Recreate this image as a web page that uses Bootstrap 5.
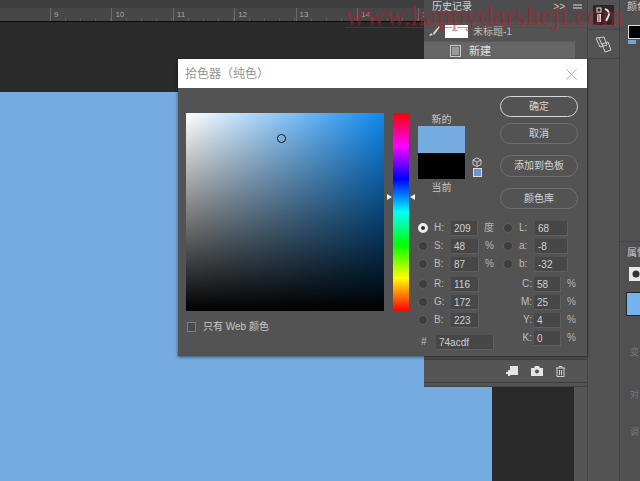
<!DOCTYPE html>
<html lang="zh">
<head>
<meta charset="utf-8">
<title>拾色器</title>
<link rel="stylesheet" href="https://cdn.jsdelivr.net/npm/bootstrap@5.3.0/dist/css/bootstrap.min.css">
<style>
html,body{width:640px;height:481px;overflow:hidden;background:#2a2a2a}
body{font-family:"Liberation Sans","Noto Sans CJK SC",sans-serif;font-size:10px;color:#ccc;line-height:1}
.app{width:640px;height:481px;position:relative;overflow:hidden}
.doc{width:574px;height:481px}
.topstrip{height:8px;background:#3e3e3e}
.ruler{height:14px;background:#474747;border-bottom:1px solid #0c0c0c;padding-left:50px;overflow:hidden}
.rcell{flex:0 0 61.4px;height:13px;border-left:1px solid #6a6a6a;padding:3px 0 0 3px;font-size:8px;color:#a5a5a5;
 background:repeating-linear-gradient(90deg,transparent 0 14px,#5f5f5f 14px 15px) bottom/100% 3px no-repeat}
.paste{height:70px;background:#2a2a2a}
.cv{background:#74acdf}
.cvw{width:492px}
.cvd{background:#2a2a2a;border-top-right-radius:4px;margin-top:296px}
.strip{width:14px;background:#555;border-right:1px solid #454545}
.toolcol{width:32px;background:#535353;border-right:1px solid #444}
.toolbox{height:30px;border-bottom:1px solid #444}
.toolbox2{height:29px;border-bottom:1px solid #444}
.tool-on{width:21px;height:20px;background:#2e2628}
.rightp{width:20px;background:#505050;overflow:hidden}
.rhead{height:16px;padding:2px 0 0 7px;font-size:10px;white-space:nowrap;color:#c9c9c9}
.fgbg{width:16px;height:14px;background:#000;border:1px solid #ddd;margin:9px 0 0 8px}
.fgsm{width:8px;height:4px;background:#6fa6dd;margin:1px 0 0 8px}
.propsp{height:197px}
.prophead{height:22px;border-top:1px solid #444;padding:6px 0 0 7px;white-space:nowrap}
.propbox{width:14px;height:14px;background:#e8e8e8;margin:4px 0 0 9px}
.propblue{width:16px;height:24px;background:#74b4ee;border:1px solid #222;margin:11px 0 0 6px}
.faint{color:#767676;font-size:9px;white-space:nowrap;margin-left:10px}
.hist{position:absolute;left:424px;top:0;width:163px;height:387px;background:#535353;border-bottom:1px solid #444}
.histhead{height:22px;padding:2px 8px 0;font-size:10px;color:#d2d2d2;background:#4d4d4d}
.histrow{height:19px}
.histthumb{width:23px;height:13px;background:#fff;margin:0 5px 0 4px}
.histnew{height:19px;width:151px;background:#666;padding-left:26px;gap:6px;border-top:1px solid #5a5a5a}
.histfill{height:299px}
.histfoot{height:24px;border-top:1px solid #3e3e3e;border-bottom:1px solid #3e3e3e;padding-right:22px;gap:13px;background:#555}
.wmark{position:absolute;left:345px;top:2px;font-family:"Liberation Serif",serif;font-size:28px;color:rgba(190,25,40,.5);white-space:nowrap;text-decoration:underline;text-decoration-thickness:1px;text-underline-offset:2px}
.dlg{position:absolute;left:178px;top:59px;width:409px;height:297px;background:#535353;box-shadow:0 1px 3px rgba(0,0,0,.55)}
.dlgtitle{height:29px;background:#fff;padding:1px 10px 0 7px;color:#949494;font-size:12px}
.dlgbody{height:268px;padding:8px 9px 0 8px}
.leftp{width:232px;padding-top:17px}
.svbox{width:198px;height:198px;position:relative;background:linear-gradient(180deg,transparent,#000),linear-gradient(90deg,#fff,#0e88ee)}
.svdot{position:absolute;left:91px;top:21px;width:9px;height:9px;border:1px solid #111;border-radius:50%;box-shadow:inset 0 0 0 1px rgba(255,255,255,.25)}
.huewrap{width:16px;height:198px;margin-left:9px;position:relative;background:linear-gradient(180deg,#f00,#f0f 16.6%,#00f 33.3%,#0ff 50%,#0f0 66.6%,#ff0 83.3%,#f00)}
.harr{position:absolute;top:81px;width:0;height:0;border-top:3px solid transparent;border-bottom:3px solid transparent}
.harr-l{left:-6px;border-left:5px solid #eee}
.harr-r{right:-6px;border-right:5px solid #eee}
.webline{margin-top:11px;padding-left:1px;gap:7px;font-size:10px;color:#c8c8c8}
.chk{width:9px;height:10px;border:1px solid #7d7d7d;background:#4a4a4a}
.rightcol{width:160px}
.swcol{width:82px;padding-top:18px;position:relative}
.swlab{width:47px;text-align:center;height:12px;font-size:10px;color:#c6c6c6;padding-top:1px}
.swlab2{margin-top:1px}
.swnew{width:47px;height:27px;background:#74acdf}
.swold{width:47px;height:26px;background:#000;margin-bottom:2px}
.swside{margin:0 0 4px 7px;gap:1px}
.minisw{width:9px;height:9px;background:#6b93d6;border:1px solid #ddd}
.btncol{width:78px}
.psbtn{display:block;width:78px;height:21px;padding:0;font-size:10px;line-height:19px;color:#d5d5d5;background:transparent;border:1px solid #6f6f6f;border-radius:11px}
.psbtn:first-child{border-color:#d8d8d8;margin-bottom:6px}
.mb11{margin-bottom:11px}
.tall{height:22px;line-height:20px}
.fields{margin-top:10px;gap:9px}
.fcol{width:76px}
.fcol2{width:75px}
.frow{height:18px;gap:0;font-size:10px;color:#bdbdbd}
.radio{flex:0 0 10px;height:10px;border-radius:50%;background:#3e3e3e;border:1px solid #5f5f5f;margin-right:6px}
.radio-on{background:#2b2b2b;border:3px solid #eee}
.flab{flex:0 0 17px;white-space:nowrap}
.fcol2 .flab{flex-basis:16px}
.finp{background:#474747;color:#cfcfcf;height:15px;line-height:15px;padding-left:3px;font-size:10px;border-right:1px solid #5f5f5f;border-bottom:1px solid #5f5f5f}
.w28{width:28px}.w33{width:33px}.w27{width:27px}
.funit{margin-left:6px;color:#b5b5b5}
.gap2{height:2px}.gap4{height:4px}
.cmlab{flex:0 0 32px;text-align:right;padding-right:2px;margin-left:-1px}
.hexlab{flex:0 0 18px;padding-left:3px}
.w59{width:59px}
svg{display:block}
</style>
</head>
<body>
<div class="app d-flex">
  <div class="doc d-flex flex-column">
    <div class="topstrip"></div>
    <div class="ruler d-flex">
      <div class="rcell">9</div><div class="rcell">10</div><div class="rcell">11</div><div class="rcell">12</div><div class="rcell">13</div><div class="rcell">14</div><div class="rcell">15</div>
    </div>
    <div class="paste"></div>
    <div class="d-flex flex-grow-1">
      <div class="cv cvw"></div>
      <div class="cvd flex-grow-1"></div>
    </div>
  </div>
  <div class="strip"></div>
  <div class="toolcol d-flex flex-column">
    <div class="toolbox d-flex justify-content-center align-items-center">
      <div class="tool-on d-flex justify-content-center align-items-center">
        <svg width="17" height="16" viewBox="0 0 17 16"><rect x="2" y="1" width="4" height="4" fill="none" stroke="#ddd"/><rect x="2" y="7" width="4" height="8" fill="#e9d5d5"/><path d="M10 2c4 1 5 5 3 8l-2 4" fill="none" stroke="#e8dede" stroke-width="2"/></svg>
      </div>
    </div>
    <div class="toolbox2 d-flex justify-content-center align-items-center">
      <svg width="17" height="17" viewBox="0 0 17 17" fill="none" stroke="#d0d0d0"><path d="M1 2 9 1l3 8-7 2zM7 8l6-2 3 8-6 2z"/><path d="M4 2l3 7"/></svg>
    </div>
  </div>
  <div class="rightp">
    <div class="rhead">颜色</div>
    <div class="fgbg"></div>
    <div class="fgsm"></div>
    <div class="propsp"></div>
    <div class="prophead">属性</div>
    <div class="propbox d-flex justify-content-center align-items-center"><svg width="8" height="8"><circle cx="4" cy="4" r="3.500" fill="#333"/></svg></div>
    <div class="propblue"></div>
    <div style="height:32px"></div>
    <div class="faint">变</div>
    <div style="height:34px"></div>
    <div class="faint">对</div>
    <div style="height:28px"></div>
    <div class="faint">调</div>
  </div>

  <div class="hist d-flex flex-column">
    <div class="histhead d-flex justify-content-between align-items-start">
      <span>历史记录</span>
      <span class="d-flex align-items-center gap-2" style="margin-right:-3px">
        <span>&gt;&gt;</span>
        <svg width="9" height="6" viewBox="0 0 9 6"><path d="M0 1h9M0 4h9" stroke="#aaa" stroke-width="1.500"/></svg>
      </span>
    </div>
    <div class="histrow d-flex align-items-center" style="padding-left:4px">
      <svg width="13" height="13" viewBox="0 0 13 13"><path d="M1 11l2-3 2 2zM5 8l6-7 1 1-6 8z" fill="#ddd"/></svg>
      <div class="histthumb"></div>
      <span style="color:#bdbdbd">未标题-1</span>
    </div>
    <div class="histnew d-flex align-items-center">
      <svg width="11" height="12" viewBox="0 0 11 12"><rect x=".5" y=".5" width="10" height="11" fill="none" stroke="#ccc"/><path d="M2 3h7M2 5h7M2 7h7M2 9h7" stroke="#ccc"/></svg>
      <span style="color:#e0e0e0;font-size:11px;margin-left:2px;padding-top:1px">新建</span>
    </div>
    <div class="histfill"></div>
    <div class="histfoot d-flex justify-content-end align-items-center">
      <svg width="12" height="11" viewBox="0 0 12 11"><rect x="4" y="0" width="8" height="9" fill="#e4e4e4"/><path d="M0 7h6M3 4v6" stroke="#e4e4e4" stroke-width="2"/></svg>
      <svg width="12" height="10" viewBox="0 0 12 10"><path d="M0 2h3l1-2h4l1 2h3v8H0z" fill="#e4e4e4"/><circle cx="6" cy="5.500" r="2" fill="#555"/></svg>
      <svg width="9" height="11" viewBox="0 0 9 11" fill="none" stroke="#d0d0d0"><path d="M0 2h9M3 2V.5h3V2M1 2v8.500h7V2M3.500 4v5M5.500 4v5"/></svg>
    </div>
  </div>

  <div class="wmark">www.happydarsheji.com</div>

  <div class="dlg d-flex flex-column">
    <div class="dlgtitle d-flex justify-content-between align-items-center">
      <span>拾色器（纯色）</span>
      <svg width="11" height="11" viewBox="0 0 11 11"><path d="M.5.500l10 10M10.500.500l-10 10" stroke="#b5b5b5"/></svg>
    </div>
    <div class="dlgbody d-flex">
      <div class="leftp">
        <div class="d-flex">
          <div class="svbox"><div class="svdot"></div></div>
          <div class="huewrap"><div class="harr harr-l"></div><div class="harr harr-r"></div></div>
        </div>
        <div class="webline d-flex align-items-center">
          <div class="chk"></div><span>只有 Web 颜色</span>
        </div>
      </div>
      <div class="rightcol">
        <div class="d-flex">
          <div class="swcol">
            <div class="swlab">新的</div>
            <div class="d-flex align-items-end">
              <div>
                <div class="swnew"></div>
                <div class="swold"></div>
              </div>
              <div class="swside d-flex flex-column align-items-center">
                <svg width="10" height="10" viewBox="0 0 10 10" fill="none" stroke="#ccc"><path d="M5 .8 9 3v4.500L5 9.500 1 7.500V3zM1 3l4 2 4-2M5 5v4.500"/></svg>
                <div class="minisw"></div>
              </div>
            </div>
            <div class="swlab swlab2">当前</div>
          </div>
          <div class="btncol">
            <button type="button" class="btn psbtn">确定</button>
            <button type="button" class="btn psbtn mb11">取消</button>
            <button type="button" class="btn psbtn tall mb11">添加到色板</button>
            <button type="button" class="btn psbtn">颜色库</button>
          </div>
        </div>
        <div class="fields d-flex">
          <div class="fcol">
            <div class="frow d-flex align-items-center"><span class="radio radio-on"></span><span class="flab">H:</span><span class="finp w28">209</span><span class="funit">度</span></div>
            <div class="frow d-flex align-items-center"><span class="radio"></span><span class="flab">S:</span><span class="finp w28">48</span><span class="funit">%</span></div>
            <div class="frow d-flex align-items-center"><span class="radio"></span><span class="flab">B:</span><span class="finp w28">87</span><span class="funit">%</span></div>
            <div class="gap2"></div>
            <div class="frow d-flex align-items-center"><span class="radio"></span><span class="flab">R:</span><span class="finp w28">116</span></div>
            <div class="frow d-flex align-items-center"><span class="radio"></span><span class="flab">G:</span><span class="finp w28">172</span></div>
            <div class="frow d-flex align-items-center"><span class="radio"></span><span class="flab">B:</span><span class="finp w28">223</span></div>
            <div class="gap4"></div>
            <div class="frow d-flex align-items-center"><span class="hexlab">#</span><span class="finp w59">74acdf</span></div>
          </div>
          <div class="fcol2">
            <div class="frow d-flex align-items-center"><span class="radio"></span><span class="flab">L:</span><span class="finp w33">68</span></div>
            <div class="frow d-flex align-items-center"><span class="radio"></span><span class="flab">a:</span><span class="finp w33">-8</span></div>
            <div class="frow d-flex align-items-center"><span class="radio"></span><span class="flab">b:</span><span class="finp w33">-32</span></div>
            <div class="gap2"></div>
            <div class="frow d-flex align-items-center"><span class="cmlab">C:</span><span class="finp w27">58</span><span class="funit">%</span></div>
            <div class="frow d-flex align-items-center"><span class="cmlab">M:</span><span class="finp w27">25</span><span class="funit">%</span></div>
            <div class="frow d-flex align-items-center"><span class="cmlab">Y:</span><span class="finp w27">4</span><span class="funit">%</span></div>
            <div class="frow d-flex align-items-center"><span class="cmlab">K:</span><span class="finp w27">0</span><span class="funit">%</span></div>
          </div>
        </div>
      </div>
    </div>
  </div>
</div>
<script src="https://cdn.jsdelivr.net/npm/bootstrap@5.3.0/dist/js/bootstrap.bundle.min.js"></script>
</body>
</html>
